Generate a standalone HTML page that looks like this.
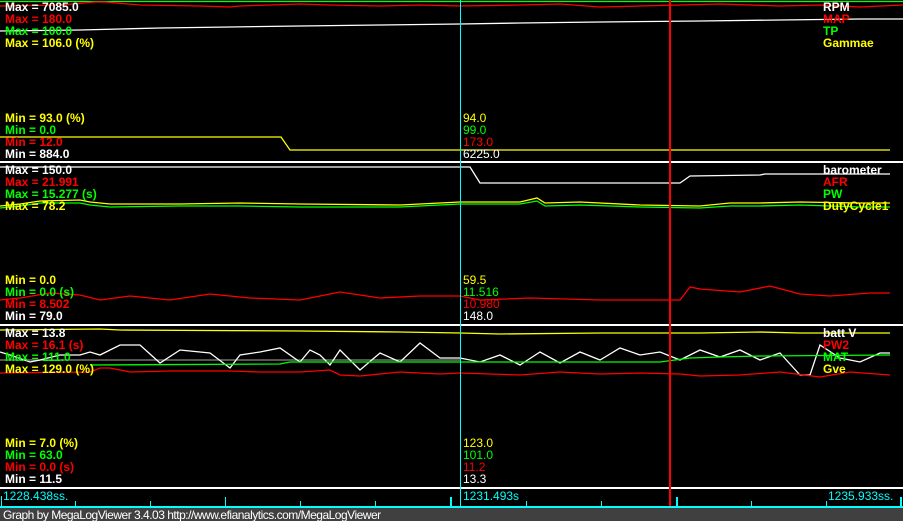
<!DOCTYPE html>
<html><head><meta charset="utf-8"><style>
html,body{margin:0;padding:0;background:#000;width:903px;height:521px;overflow:hidden}
svg{display:block}
.b{font-family:"Liberation Sans",sans-serif;font-weight:bold;font-size:12px}
.n{font-family:"Liberation Sans",sans-serif;font-size:12px}
.t{font-family:"Liberation Sans",sans-serif;font-size:12px;letter-spacing:-0.5px}
</style></head><body>
<svg width="903" height="521" viewBox="0 0 903 521" xmlns="http://www.w3.org/2000/svg">
<rect width="903" height="521" fill="#000"/>
<g fill="none" stroke-width="1.3">
<line x1="0" y1="1.5" x2="903" y2="1.5" stroke="#0f0"/>
<polyline stroke="#f00" points="0,6 60,5 95,2 105,2 140,5 200,6 230,7 240,6 270,5 300,4 330,5 380,6 420,5 460,6 520,5 560,4 600,7 640,6 680,5 720,4 780,6 820,5 860,7 903,5"/>
<polyline stroke="#fff" points="0,31 80,30 120,29 160,28 230,27 300,26 380,25 460,24 520,23 600,22 700,21 780,20 860,19 903,19"/>
<polyline stroke="#ff0" points="0,137 281,137 290,150 890,150"/>
<polyline stroke="#fff" points="0,167 470,167 480,183 680,183 690,176 760,175 765,174 890,174"/>
<polyline stroke="#ff0" points="0,206 20,204 40,201 80,200 90,202 110,204 180,204 240,203 300,204 400,205 460,202 520,202 537,198 545,203 580,202 640,205 700,206 730,203 760,203 800,202 860,203 890,203"/>
<polyline stroke="#0f0" points="0,208 20,206 40,203 80,203 90,205 110,207 180,206 240,206 300,207 400,207 460,204 520,204 537,201 545,206 580,205 640,207 700,208 730,206 760,206 800,205 860,207 890,207"/>
<polyline stroke="#f00" points="0,300 20,298 50,293 80,295 100,300 130,296 170,300 210,294 250,298 300,300 340,292 380,298 420,296 460,296 480,300 530,298 600,300 680,300 690,287 700,289 740,292 770,286 800,294 830,296 870,293 890,293"/>
<polyline stroke="#ff0" points="0,330 100,329 120,330 300,331 400,332 460,333 500,334 600,333 700,333 760,332 800,333 850,333 890,333"/>
<line x1="0" y1="360" x2="460" y2="360" stroke="#888"/>
<polyline stroke="#fff" points="0,352 10,355 30,362 40,360 60,355 80,355 90,352 100,355 120,345 140,345 160,363 180,350 210,353 230,368 240,355 260,352 280,348 300,362 310,350 320,355 330,365 340,350 360,370 380,353 400,362 420,343 440,358 460,358 480,362 500,355 520,365 540,352 560,363 580,352 600,360 620,348 640,355 660,352 680,360 700,350 720,357 740,350 760,360 780,353 800,375 810,375 820,345 840,358 860,362 880,353 890,353"/>
<polyline stroke="#0f0" points="90,365 280,364 290,362 440,362 460,362 660,362 690,358 720,357 760,356 890,355"/>
<polyline stroke="#f00" points="0,373 90,372 100,368 110,368 130,372 170,371 230,371 260,372 300,372 330,370 340,375 360,376 400,372 440,374 460,373 520,375 560,372 600,374 640,373 680,374 700,376 740,375 780,372 820,377 850,372 890,375"/>
</g>
<rect x="0" y="161" width="903" height="2" fill="#fff"/>
<rect x="0" y="324" width="903" height="2" fill="#fff"/>
<rect x="0" y="487" width="903" height="2" fill="#fff"/>
<rect x="460" y="0" width="1" height="508" fill="#0ff"/>
<rect x="669" y="0" width="2" height="508" fill="#f00"/>
<rect x="0" y="506" width="903" height="2" fill="#0ff"/>
<g fill="#0ff">
<rect x="1" y="496" width="1" height="11"/>
<rect x="75" y="501" width="1" height="6"/>
<rect x="150" y="501" width="1" height="6"/>
<rect x="225" y="497" width="1" height="10"/>
<rect x="300" y="501" width="1" height="6"/>
<rect x="375" y="501" width="1" height="6"/>
<rect x="450" y="497" width="2" height="10"/>
<rect x="526" y="501" width="1" height="6"/>
<rect x="601" y="501" width="1" height="6"/>
<rect x="676" y="497" width="2" height="10"/>
<rect x="751" y="501" width="1" height="6"/>
<rect x="826" y="501" width="1" height="6"/>
<rect x="900" y="497" width="2" height="10"/>
</g>
<rect x="0" y="508" width="903" height="13" fill="#404040"/>
<g class="b">
<text x="5" y="11" fill="#fff">Max = 7085.0</text>
<text x="5" y="23" fill="#f00">Max = 180.0</text>
<text x="5" y="35" fill="#0f0">Max = 100.0</text>
<text x="5" y="47" fill="#ff0">Max = 106.0 (%)</text>
<text x="5" y="122" fill="#ff0">Min = 93.0 (%)</text>
<text x="5" y="134" fill="#0f0">Min = 0.0</text>
<text x="5" y="146" fill="#f00">Min = 12.0</text>
<text x="5" y="158" fill="#fff">Min = 884.0</text>
<text x="5" y="174" fill="#fff">Max = 150.0</text>
<text x="5" y="186" fill="#f00">Max = 21.991</text>
<text x="5" y="198" fill="#0f0">Max = 15.277 (s)</text>
<text x="5" y="210" fill="#ff0">Max = 78.2</text>
<text x="5" y="284" fill="#ff0">Min = 0.0</text>
<text x="5" y="296" fill="#0f0">Min = 0.0 (s)</text>
<text x="5" y="308" fill="#f00">Min = 8.502</text>
<text x="5" y="320" fill="#fff">Min = 79.0</text>
<text x="5" y="337" fill="#fff">Max = 13.8</text>
<text x="5" y="349" fill="#f00">Max = 16.1 (s)</text>
<text x="5" y="361" fill="#0f0">Max = 111.0</text>
<text x="5" y="373" fill="#ff0">Max = 129.0 (%)</text>
<text x="5" y="447" fill="#ff0">Min = 7.0 (%)</text>
<text x="5" y="459" fill="#0f0">Min = 63.0</text>
<text x="5" y="471" fill="#f00">Min = 0.0 (s)</text>
<text x="5" y="483" fill="#fff">Min = 11.5</text>
<text x="823" y="11" fill="#fff">RPM</text>
<text x="823" y="23" fill="#f00">MAP</text>
<text x="823" y="35" fill="#0f0">TP</text>
<text x="823" y="47" fill="#ff0">Gammae</text>
<text x="823" y="174" fill="#fff">barometer</text>
<text x="823" y="186" fill="#f00">AFR</text>
<text x="823" y="198" fill="#0f0">PW</text>
<text x="823" y="210" fill="#ff0">DutyCycle1</text>
<text x="823" y="337" fill="#fff">batt V</text>
<text x="823" y="349" fill="#f00">PW2</text>
<text x="823" y="361" fill="#0f0">MAT</text>
<text x="823" y="373" fill="#ff0">Gve</text>
</g>
<g class="n">
<text x="463" y="122" fill="#ff0">94.0</text>
<text x="463" y="134" fill="#0f0">99.0</text>
<text x="463" y="146" fill="#f00">173.0</text>
<text x="463" y="158" fill="#fff">6225.0</text>
<text x="463" y="284" fill="#ff0">59.5</text>
<text x="463" y="296" fill="#0f0">11.516</text>
<text x="463" y="308" fill="#f00">10.980</text>
<text x="463" y="320" fill="#fff">148.0</text>
<text x="463" y="447" fill="#ff0">123.0</text>
<text x="463" y="459" fill="#0f0">101.0</text>
<text x="463" y="471" fill="#f00">11.2</text>
<text x="463" y="483" fill="#fff">13.3</text>
<text x="3" y="500" fill="#0ff">1228.438ss.</text>
<text x="463" y="500" fill="#0ff">1231.493s</text>
<text x="828" y="500" fill="#0ff">1235.933ss.</text>
</g>
<text x="3" y="519" class="t" fill="#fff">Graph by MegaLogViewer 3.4.03 http://www.efianalytics.com/MegaLogViewer</text>
</svg>
</body></html>
